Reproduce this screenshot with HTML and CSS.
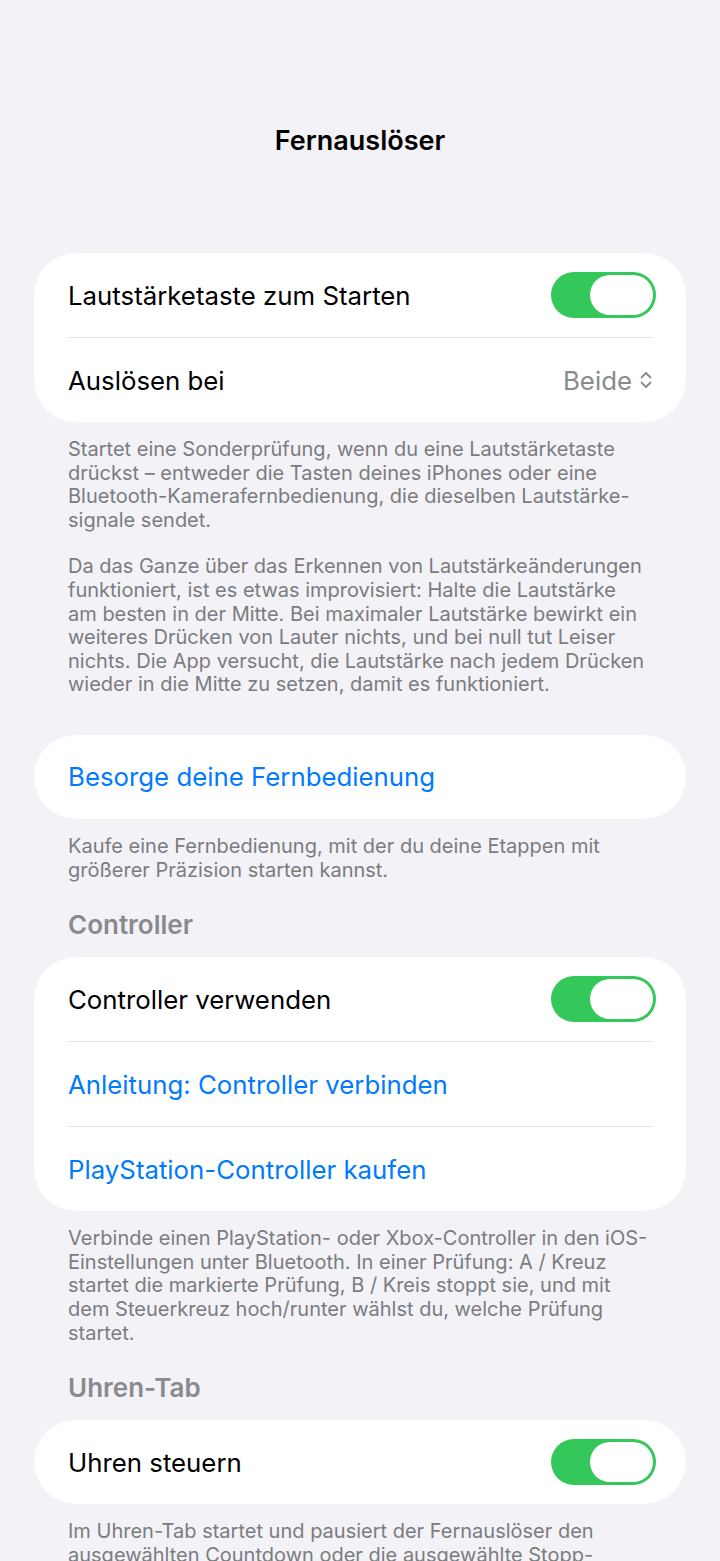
FILE: index.html
```html
<!DOCTYPE html>
<html lang="de">
<head>
  <meta charset="UTF-8">
  <meta name="viewport" content="width=device-width, initial-scale=1.0" />
  <title>Fernauslöser</title>
  <link rel="stylesheet" href="styles.css">
</head>
<body>
  <div class="nav">
    <h1>Fernauslöser</h1>
  </div>

  <section class="group">
    <div class="card">
      <div class="row">
        <span class="label">Lautstärketaste zum Starten</span>
        <span class="toggle on"><span class="knob"></span></span>
      </div>
      <div class="row">
        <span class="label">Auslösen bei</span>
        <span class="value">Beide
          <svg class="updown" width="14" height="20" viewBox="0 0 14 20">
            <path d="M2.5 7.5 L7 3 L11.5 7.5 M2.5 12.5 L7 17 L11.5 12.5" fill="none" stroke="#8a8a8e" stroke-width="1.8" stroke-linecap="round" stroke-linejoin="round"/>
          </svg>
        </span>
      </div>
    </div>
    <div class="footer">
      <p>Startet eine Sonderprüfung, wenn du eine Lautstärketaste<br>drückst – entweder die Tasten deines iPhones oder eine<br>Bluetooth-Kamerafernbedienung, die dieselben Lautstärke-<br>signale sendet.</p>
      <p>Da das Ganze über das Erkennen von Lautstärkeänderungen<br>funktioniert, ist es etwas improvisiert: Halte die Lautstärke<br>am besten in der Mitte. Bei maximaler Lautstärke bewirkt ein<br>weiteres Drücken von Lauter nichts, und bei null tut Leiser<br>nichts. Die App versucht, die Lautstärke nach jedem Drücken<br>wieder in die Mitte zu setzen, damit es funktioniert.</p>
    </div>
  </section>

  <section class="group group-plain">
    <div class="card">
      <div class="row">
        <span class="label link">Besorge deine Fernbedienung</span>
      </div>
    </div>
    <div class="footer">
      <p>Kaufe eine Fernbedienung, mit der du deine Etappen mit<br>größerer Präzision starten kannst.</p>
    </div>
  </section>

  <section class="group">
    <h2>Controller</h2>
    <div class="card">
      <div class="row">
        <span class="label">Controller verwenden</span>
        <span class="toggle on"><span class="knob"></span></span>
      </div>
      <div class="row">
        <span class="label link">Anleitung: Controller verbinden</span>
      </div>
      <div class="row">
        <span class="label link">PlayStation-Controller kaufen</span>
      </div>
    </div>
    <div class="footer">
      <p>Verbinde einen PlayStation- oder Xbox-Controller in den iOS-<br>Einstellungen unter Bluetooth. In einer Prüfung: A / Kreuz<br>startet die markierte Prüfung, B / Kreis stoppt sie, und mit<br>dem Steuerkreuz hoch/runter wählst du, welche Prüfung<br>startet.</p>
    </div>
  </section>

  <section class="group">
    <h2>Uhren-Tab</h2>
    <div class="card">
      <div class="row">
        <span class="label">Uhren steuern</span>
        <span class="toggle on"><span class="knob"></span></span>
      </div>
    </div>
    <div class="footer">
      <p>Im Uhren-Tab startet und pausiert der Fernauslöser den<br>ausgewählten Countdown oder die ausgewählte Stopp-<br>uhr.</p>
    </div>
  </section>
</body>
</html>
```

FILE: styles.css
```css
body {
  margin: 0;
  background: #f2f2f7;
  font-family: Inter, "Noto Sans", sans-serif;
  color: #000;
}

.nav {
  padding-top: 124px;
  margin-bottom: 95px;
  text-align: center;
}

h1 {
  margin: 0;
  font-size: 27px;
  line-height: 34px;
  font-weight: 600;
}

.group {
  margin-top: 28px;
}

.group:first-of-type {
  margin-top: 0;
}

.group-plain {
  margin-top: 38px;
}

h2 {
  margin: 0 0 17px;
  padding-left: 68px;
  font-size: 26px;
  line-height: 30px;
  font-weight: 600;
  color: #8a8a8e;
}

.card {
  background: white;
  margin: 0 34px;
  border-radius: 42px;
  padding: 0 33px 0 34px;
}

.row {
  display: flex;
  align-items: center;
  justify-content: space-between;
  height: 84px;
  border-bottom: 1px solid #e3e3e8;
}

.row:last-child {
  border-bottom: none;
}

.label {
  font-size: 25.8px;
}

.link {
  color: #007aff;
}

.value {
  display: flex;
  align-items: center;
  gap: 7px;
  font-size: 25.8px;
  color: #8a8a8e;
}

.toggle {
  position: relative;
  width: 105px;
  height: 46px;
  margin-right: -3px;
  border-radius: 23px;
  background: #34c759;
}

.toggle .knob {
  position: absolute;
  top: 3px;
  right: 3px;
  width: 63px;
  height: 40px;
  border-radius: 20px;
  background: white;
}

.footer {
  padding: 16px 30px 0 68px;
  font-size: 20px;
  line-height: 23.6px;
  color: #7c7c80;
}

.footer p {
  margin: 0;
}

.footer p + p {
  margin-top: 23px;
}
```
